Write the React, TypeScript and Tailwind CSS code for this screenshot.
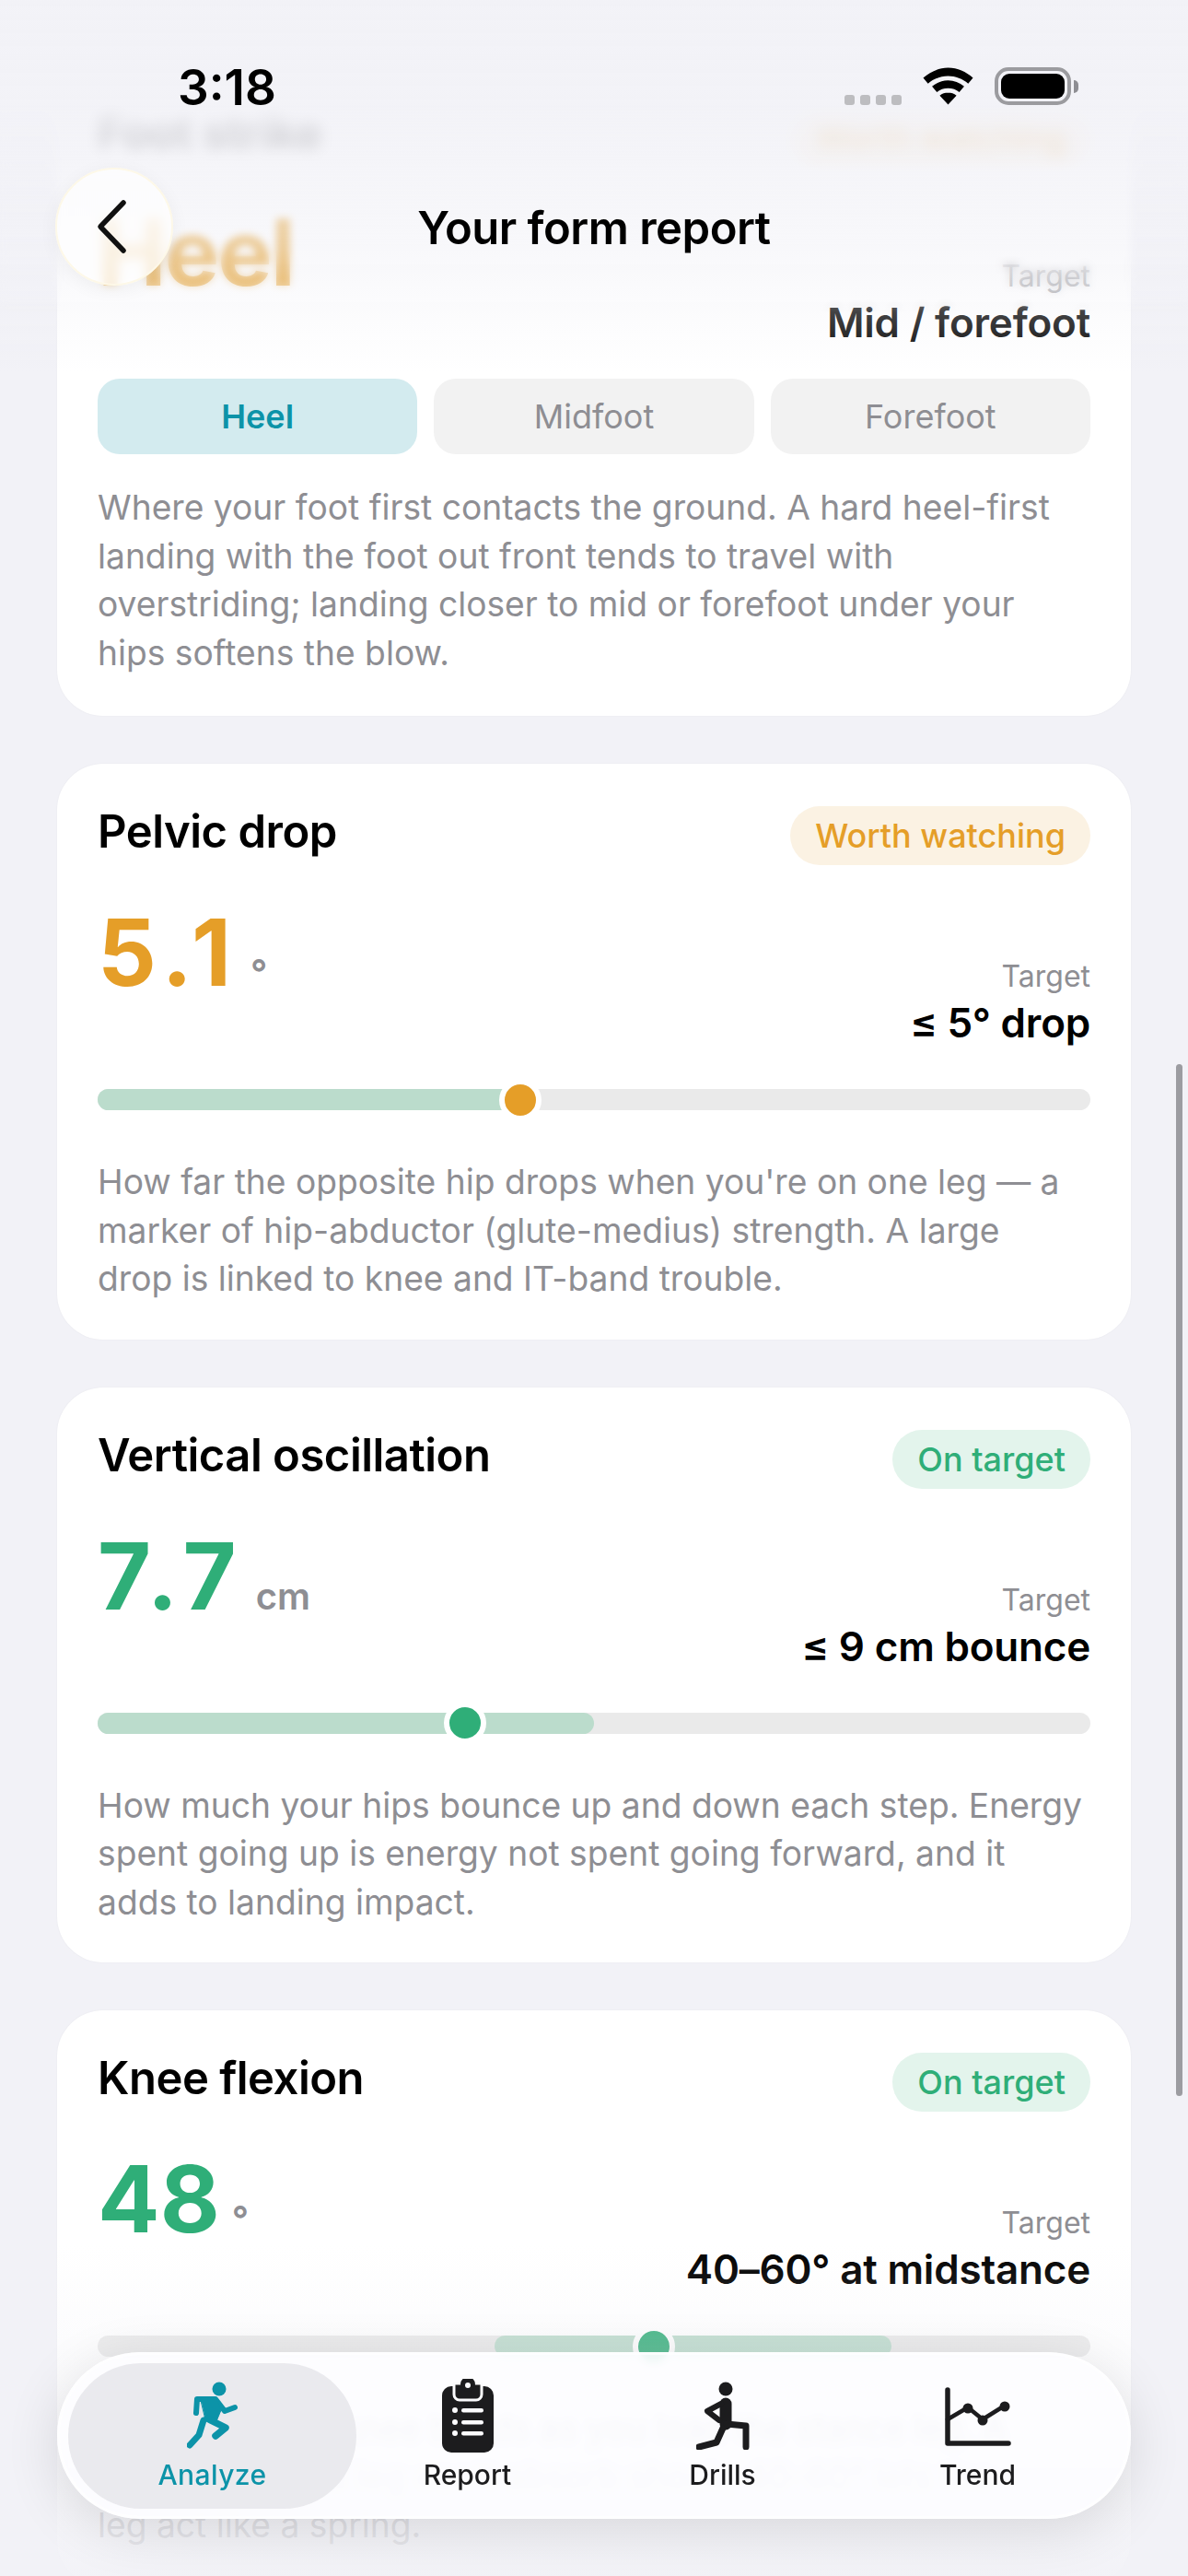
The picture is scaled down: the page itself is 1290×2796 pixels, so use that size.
const sans = "font-['Inter','Liberation_Sans',sans-serif]";

type Metric = {
  title: string;
  status: string;
  good: boolean;
  value: string;
  spacing: string;
  unit: string;
  target: string;
  fillFrom: number;
  fillTo: number;
  thumb: number;
  body: string;
};

const metrics: Metric[] = [
  {
    title: "Pelvic drop",
    status: "Worth watching",
    good: false,
    value: "5.1",
    spacing: "tracking-[8px]",
    unit: "°",
    target: "≤ 5° drop",
    fillFrom: 0,
    fillTo: 42.6,
    thumb: 42.6,
    body: "How far the opposite hip drops when you're on one leg — a marker of hip-abductor (glute-medius) strength. A large\ndrop is linked to knee and IT-band trouble.",
  },
  {
    title: "Vertical oscillation",
    status: "On target",
    good: true,
    value: "7.7",
    spacing: "tracking-[8px]",
    unit: "cm",
    target: "≤ 9 cm bounce",
    fillFrom: 0,
    fillTo: 50,
    thumb: 37,
    body: "How much your hips bounce up and down each step. Energy spent going up is energy not spent going forward, and it adds to landing impact.",
  },
  {
    title: "Knee flexion",
    status: "On target",
    good: true,
    value: "48",
    spacing: "tracking-[0px]",
    unit: "°",
    target: "40–60° at midstance",
    fillFrom: 40,
    fillTo: 80,
    thumb: 56,
    body: "How much the knee bends as you load the stance leg. A straight, locked leg can't absorb shock; 40–60° lets the\nleg act like a spring.",
  },
];

function CardHead({ title, status, good }: { title: string; status: string; good: boolean }) {
  return (
    <div className="flex items-start justify-between">
      <div className="text-[49px] leading-[56px] font-semibold tracking-[-0.5px] text-black">{title}</div>
      <div
        className={
          good
            ? "rounded-full bg-[#e3f4ec] px-[27px] py-[9px] text-[36px] leading-[46px] font-medium text-[#2fae78]"
            : "rounded-full bg-[#fbf2e3] px-[27px] py-[9px] text-[36px] leading-[46px] font-medium text-[#e59e28]"
        }
      >
        {status}
      </div>
    </div>
  );
}

function TargetBlock({ target }: { target: string }) {
  return (
    <div className="mt-[83px] text-right">
      <div className="text-[32px] leading-[40px] text-[#8e8e93]">Target</div>
      <div className="mt-[3px] text-[44px] leading-[54px] font-semibold tracking-[-0.2px] text-black">{target}</div>
    </div>
  );
}

function MetricCard({ m }: { m: Metric }) {
  return (
    <div className="rounded-[50px] bg-white px-[44px] pt-[46px] pb-[39px] shadow-[0_0_2px_rgba(0,0,0,0.05)]">
      <CardHead title={m.title} status={m.status} good={m.good} />
      <div className="mt-[18px] flex items-start justify-between">
        <div className="mt-[17px] flex items-baseline gap-[13px]">
          <span className={`text-[100px] leading-[120px] font-bold ${m.spacing} ${m.good ? "text-[#2fae78]" : "text-[#e59e28]"}`}>
            {m.value}
          </span>
          <span className="text-[40px] font-semibold text-[#8e8e93]">{m.unit}</span>
        </div>
        <TargetBlock target={m.target} />
      </div>
      <div className="relative mt-[45px] h-[23px] rounded-full bg-[#eaeaea]">
        <div
          className="absolute top-0 h-full rounded-full bg-[#bbdccc]"
          style={{ left: `${m.fillFrom}%`, width: `${m.fillTo - m.fillFrom}%` }}
        />
        <div
          className={
            m.good
              ? "absolute top-1/2 h-[46px] w-[46px] -translate-x-1/2 -translate-y-1/2 rounded-full border-[6px] border-white bg-[#2fae78]"
              : "absolute top-1/2 h-[46px] w-[46px] -translate-x-1/2 -translate-y-1/2 rounded-full border-[6px] border-white bg-[#e59e28]"
          }
          style={{ left: `${m.thumb}%` }}
        />
      </div>
      <p className="mt-[52px] text-[37.2px] leading-[52.5px] whitespace-pre-line text-[#8e8e93]">{m.body}</p>
    </div>
  );
}

function FootStrikeCard() {
  return (
    <div className="rounded-[50px] bg-white px-[44px] pt-[46px] pb-[42px] shadow-[0_0_2px_rgba(0,0,0,0.05)]">
      <CardHead title="Foot strike" status="Worth watching" good={false} />
      <div className="mt-[18px] flex items-start justify-between">
        <div className="mt-[17px] text-[100px] leading-[120px] font-bold tracking-[-2px] text-[#e59e28]">Heel</div>
        <TargetBlock target="Mid / forefoot" />
      </div>
      <div className="mt-[34px] grid grid-cols-3 gap-[18px]">
        <div className="flex h-[82px] items-center justify-center rounded-[24px] bg-[#d3ebef] text-[36px] font-semibold text-[#0c93a8]">Heel</div>
        <div className="flex h-[82px] items-center justify-center rounded-[24px] bg-[#f2f2f2] text-[36px] text-[#8e8e93]">Midfoot</div>
        <div className="flex h-[82px] items-center justify-center rounded-[24px] bg-[#f2f2f2] text-[36px] text-[#8e8e93]">Forefoot</div>
      </div>
      <p className="mt-[32px] text-[37.2px] leading-[52.5px] text-[#8e8e93]">
        Where your foot first contacts the ground. A hard heel-first landing with the foot out front tends to travel with overstriding; landing closer to mid or forefoot under your hips softens the blow.
      </p>
    </div>
  );
}

function StatusBar() {
  return (
    <div className="flex items-start justify-between pt-[66px] pr-[119px] pl-[193px]">
      <div className="text-[53px] leading-[58px] font-semibold text-black">3:18</div>
      <div className="mt-[7px] flex items-end gap-[23px]">
        <div className="flex gap-[6px]">
          <span className="h-[11px] w-[11px] rounded-[3px] bg-[#bdbdc0]" />
          <span className="h-[11px] w-[11px] rounded-[3px] bg-[#bdbdc0]" />
          <span className="h-[11px] w-[11px] rounded-[3px] bg-[#bdbdc0]" />
          <span className="h-[11px] w-[11px] rounded-[3px] bg-[#bdbdc0]" />
        </div>
        <svg width="55" height="41" viewBox="0 0 58 42" fill="#000">
          <path d="M29 0C18 0 8.600 4.500 0.500 11.500l5.500 6.500C12.600 12.600 20.400 9.400 29 9.400s16.400 3.200 23 8.600l5.500-6.500C49.400 4.500 40 0 29 0z" />
          <path d="M29 14.500c-6.800 0-13 2.600-18.400 6.800l5.600 6.600c3.400-2.800 7.800-4.400 12.800-4.400s9.400 1.600 12.800 4.400l5.600-6.600C42 17.100 35.800 14.500 29 14.500z" />
          <path d="M29 28.500c-3.600 0-6.800 1.200-9.600 3.200L29 42l9.600-10.300c-2.800-2-6-3.200-9.600-3.200z" />
        </svg>
        <div className="flex items-center gap-[3px]">
          <div className="h-[41px] w-[83px] rounded-[15px] border-[4px] border-[#9b9b9f] p-[3px]">
            <div className="h-full w-full rounded-[9px] bg-black" />
          </div>
          <div className="h-[14px] w-[5px] rounded-r-full bg-[#8e8e93]" />
        </div>
      </div>
    </div>
  );
}

function RunIcon() {
  return (
    <svg width="56" height="74" viewBox="0 0 56 74" fill="none" stroke="#0c93a8" strokeLinecap="round" strokeLinejoin="round">
      <circle cx="35" cy="8" r="7.500" fill="#0c93a8" stroke="none" />
      <path d="M10 34l1-15h20l10 13 11-4" strokeWidth="6" />
      <path d="M15 19h17l5 12-5 12-12-3z" fill="#0c93a8" strokeWidth="1" />
      <path d="M22 40l20 10-11 9" strokeWidth="7.500" />
      <path d="M18 42l-5 16L3 69" strokeWidth="7" />
    </svg>
  );
}

function ClipboardIcon() {
  return (
    <svg width="58" height="80" viewBox="0 0 58 80">
      <path d="M11 8h36a10 10 0 0 1 10 10v52a10 10 0 0 1-10 10H11A10 10 0 0 1 1 70V18A10 10 0 0 1 11 8z" fill="#1c1c1e" />
      <path d="M14 5h30v12a6 6 0 0 1-6 6H20a6 6 0 0 1-6-6z" fill="#1c1c1e" stroke="#fbfbfd" strokeWidth="3" />
      <circle cx="29" cy="6" r="8" fill="#1c1c1e" />
      <circle cx="29" cy="7" r="3" fill="#fbfbfd" />
      <g fill="#fbfbfd">
        <circle cx="15" cy="34" r="3" />
        <circle cx="15" cy="47" r="3" />
        <circle cx="15" cy="59" r="3" />
        <rect x="22" y="32" width="24" height="4.500" rx="2.200" />
        <rect x="22" y="45" width="24" height="4.500" rx="2.200" />
        <rect x="22" y="57" width="24" height="4.500" rx="2.200" />
      </g>
    </svg>
  );
}

function LungeIcon() {
  return (
    <svg width="58" height="74" viewBox="0 0 58 74" fill="none" stroke="#1c1c1e" strokeLinecap="round" strokeLinejoin="round">
      <circle cx="32" cy="8" r="7.500" fill="#1c1c1e" stroke="none" />
      <path d="M32 24v22" strokeWidth="13" />
      <path d="M27 24L12 32l13 10" strokeWidth="6" />
      <path d="M31 46l-9 20L3 71" strokeWidth="7" />
      <path d="M33 46l21 2v23" strokeWidth="7" />
    </svg>
  );
}

function TrendIcon() {
  return (
    <svg width="72" height="64" viewBox="0 0 72 64" fill="none" stroke="#1c1c1e" strokeLinecap="round" strokeLinejoin="round">
      <path d="M3 3v58h66" strokeWidth="5.500" />
      <path d="M3 35l22-13 16 13 24-15" strokeWidth="4.500" />
      <circle cx="25" cy="23" r="5.500" fill="#1c1c1e" stroke="none" />
      <circle cx="41" cy="36" r="5.500" fill="#1c1c1e" stroke="none" />
      <circle cx="65" cy="21" r="5.500" fill="#1c1c1e" stroke="none" />
    </svg>
  );
}

function TabBar() {
  return (
    <div className="absolute right-[62px] bottom-[62px] left-[62px] grid h-[181px] grid-cols-[repeat(4,277px)] items-center rounded-[90px] border-[3px] border-white/70 bg-[#fdfdff]/90 pl-[27px] shadow-[0_12px_60px_rgba(0,0,0,0.12)] backdrop-blur-[5px]">
      <div className="-mx-[18px] flex h-[158px] flex-col items-center justify-center rounded-[79px] bg-[#e8e8ec]/90">
        <div className="flex h-[80px] items-end pb-[3px]"><RunIcon /></div>
        <div className="mt-[5px] text-[30px] leading-[38px] font-medium tracking-[0.4px] text-[#0c93a8]">Analyze</div>
      </div>
      <div className="flex flex-col items-center">
        <div className="flex h-[80px] items-end"><ClipboardIcon /></div>
        <div className="mt-[5px] text-[30px] leading-[38px] font-medium text-[#1c1c1e]">Report</div>
      </div>
      <div className="flex flex-col items-center">
        <div className="flex h-[80px] items-end pb-[3px]"><LungeIcon /></div>
        <div className="mt-[5px] text-[30px] leading-[38px] font-medium text-[#1c1c1e]">Drills</div>
      </div>
      <div className="flex flex-col items-center">
        <div className="flex h-[80px] items-end pb-[7px]"><TrendIcon /></div>
        <div className="mt-[5px] text-[30px] leading-[38px] font-medium text-[#1c1c1e]">Trend</div>
      </div>
    </div>
  );
}

export default function App() {
  return (
    <div className={`relative h-[2796px] w-[1290px] overflow-hidden bg-[#f2f2f7] ${sans}`}>
      {/* scrolled list, the first card is partly under the header */}
      <div className="flex flex-col gap-[52px] px-[62px] pt-[69px]">
        <FootStrikeCard />
        {metrics.map((m) => (
          <MetricCard key={m.title} m={m} />
        ))}
      </div>

      {/* scrollbar */}
      <div className="absolute top-[1155px] right-[6px] h-[1120px] w-[7px] rounded-full bg-[#9c9ca1]" />

      {/* top fade */}
      <div className="absolute inset-x-0 top-0 h-[340px] backdrop-blur-[4px] [mask-image:linear-gradient(to_bottom,black_80%,transparent)]" />
      <div className="absolute inset-x-0 top-0 h-[220px] backdrop-blur-[7px] [mask-image:linear-gradient(to_bottom,black_75%,transparent)]" />
      <div className="absolute inset-x-0 top-0 h-[410px] bg-[linear-gradient(to_bottom,rgba(242,242,247,0.98)_0%,rgba(242,242,247,0.95)_28%,rgba(242,242,247,0.55)_65%,rgba(242,242,247,0)_100%)]" />

      {/* bottom fade */}
      <div className="absolute inset-x-0 bottom-0 h-[360px] bg-[linear-gradient(to_bottom,rgba(242,242,247,0)_0%,rgba(242,242,247,0.35)_45%,rgba(242,242,247,0.7)_70%,rgba(242,242,247,0.95)_100%)]" />

      <div className="absolute inset-x-0 top-0">
        <StatusBar />
      </div>

      <div className="absolute top-[182px] left-[60px] flex h-[128px] w-[128px] items-center justify-center rounded-full border-[2px] border-[#fdf8e8] bg-white/70 shadow-[0_4px_20px_rgba(0,0,0,0.05)] backdrop-blur-[6px]">
        <svg className="-ml-[8px]" width="40" height="60" viewBox="0 0 40 60" fill="none" stroke="#111" strokeWidth="5.500" strokeLinecap="round" strokeLinejoin="round">
          <path d="M34 4L9 30l25 26" />
        </svg>
      </div>
      <div className="absolute inset-x-0 top-[219px] text-center text-[49px] leading-[58px] font-semibold tracking-[-0.5px] text-black">Your form report</div>

      <TabBar />
    </div>
  );
}
